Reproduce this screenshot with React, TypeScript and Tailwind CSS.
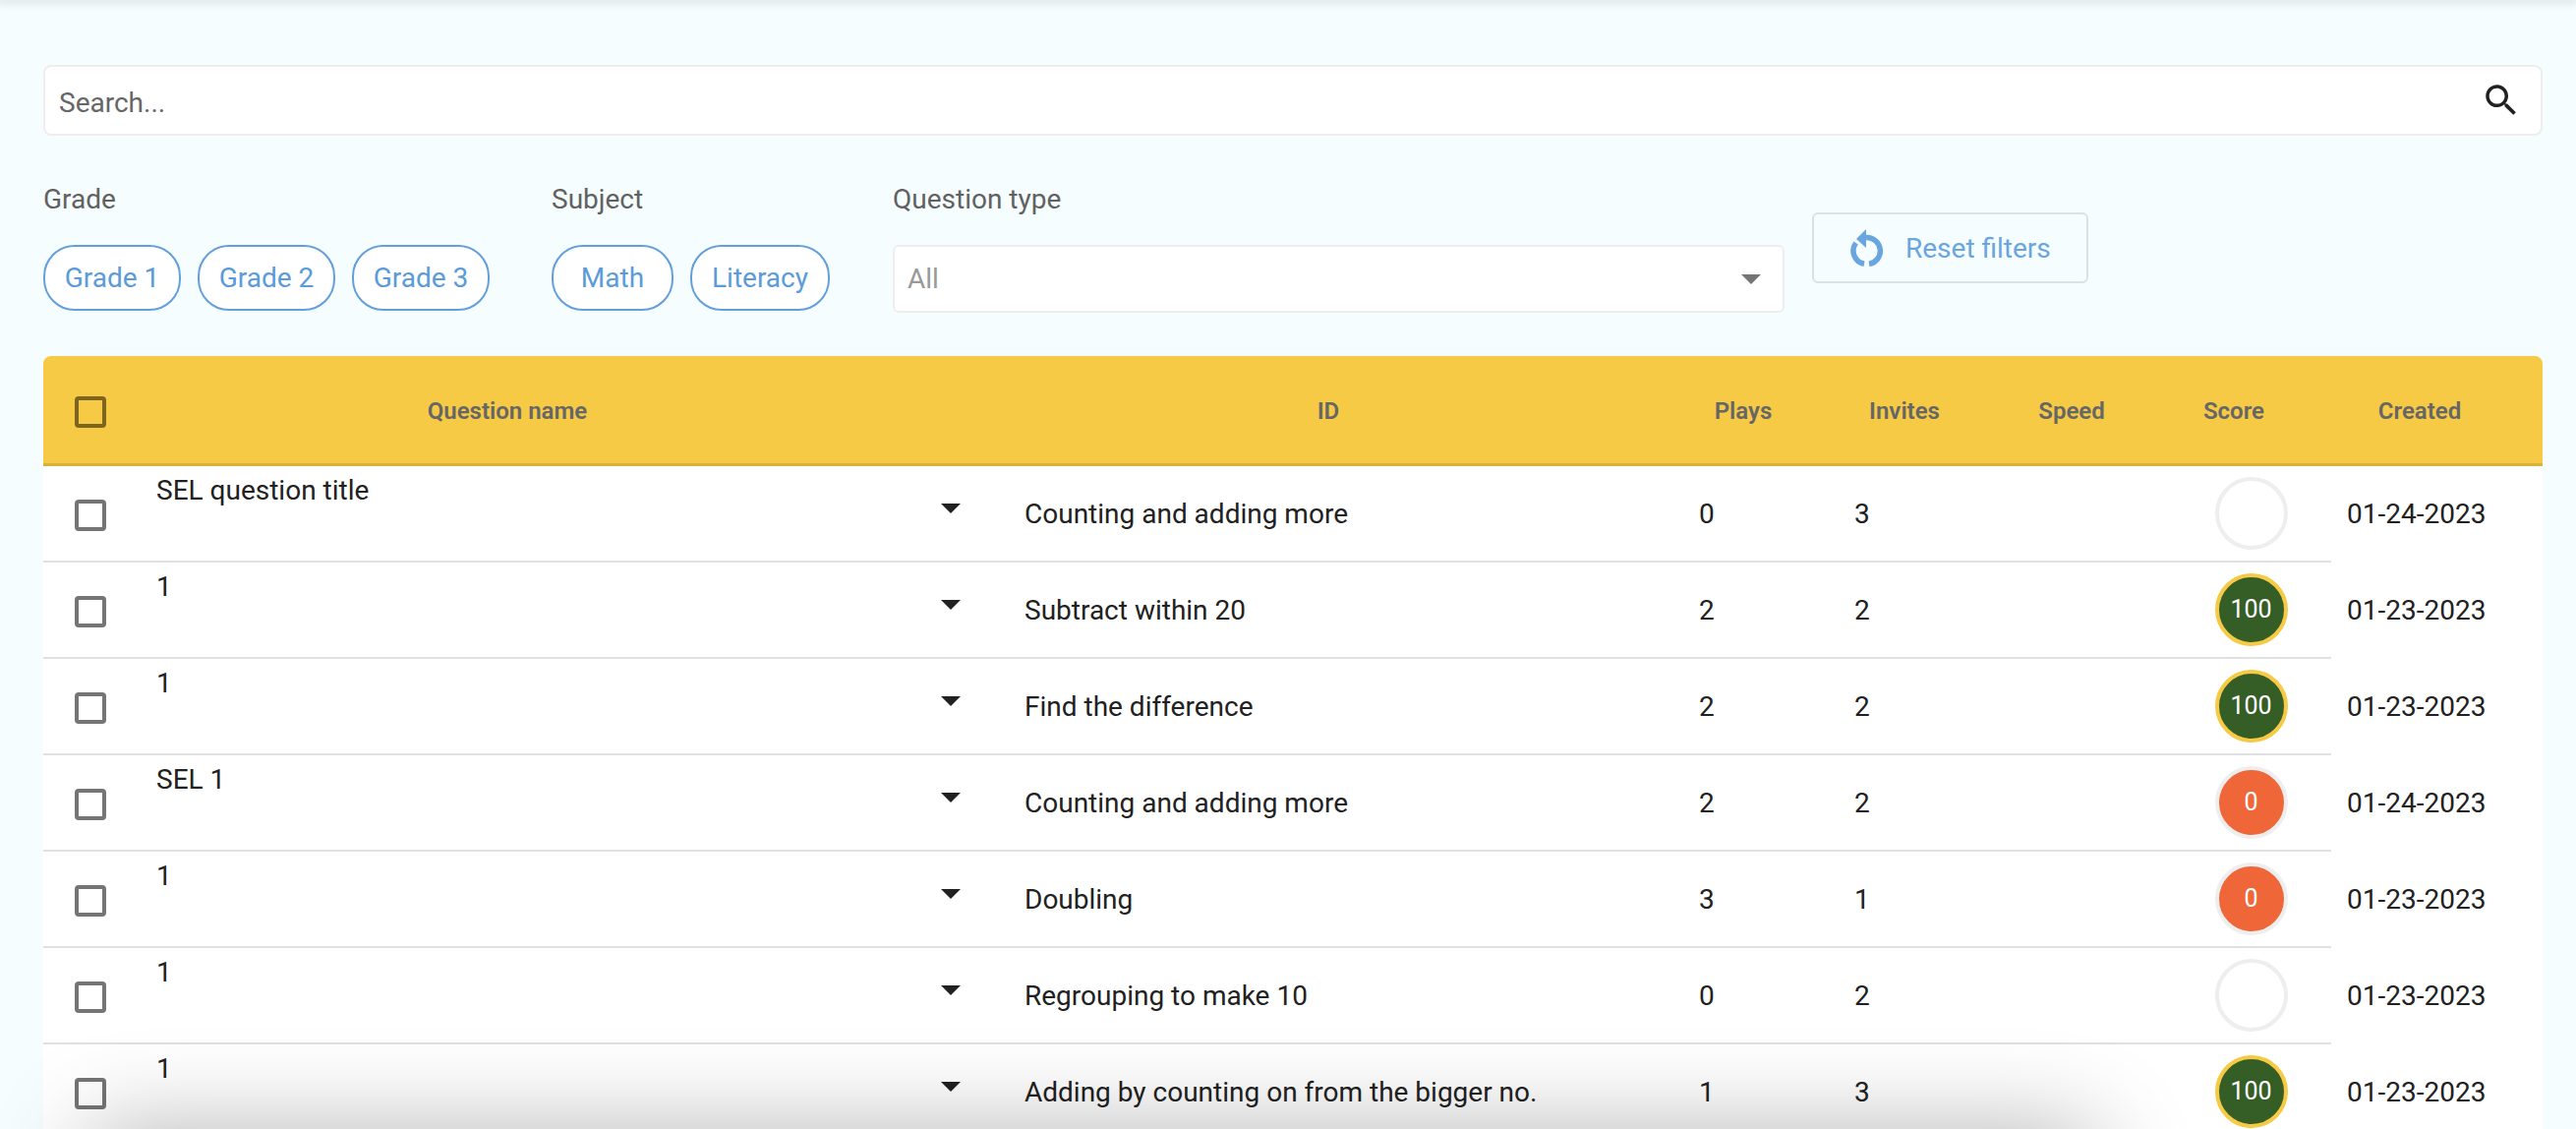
// question list - search, filter chips and the yellow-headed results table

const ROWS = [
  { name: 'SEL question title', id: 'Counting and adding more', plays: 0, invites: 3, score: null, created: '01-24-2023' },
  { name: '1', id: 'Subtract within 20', plays: 2, invites: 2, score: 100, created: '01-23-2023' },
  { name: '1', id: 'Find the difference', plays: 2, invites: 2, score: 100, created: '01-23-2023' },
  { name: 'SEL 1', id: 'Counting and adding more', plays: 2, invites: 2, score: 0, created: '01-24-2023' },
  { name: '1', id: 'Doubling', plays: 3, invites: 1, score: 0, created: '01-23-2023' },
  { name: '1', id: 'Regrouping to make 10', plays: 0, invites: 2, score: null, created: '01-23-2023' },
  { name: '1', id: 'Adding by counting on from the bigger no.', plays: 1, invites: 3, score: 100, created: '01-23-2023' },
];

const HEADERS = ['Question name', '', 'ID', 'Plays', 'Invites', 'Speed', 'Score', 'Created'];

function Chip({ label, width }: { label: string; width: string }) {
  return (
    <div className={`${width} h-[67px] rounded-[32px] border-2 border-[#629fdb] bg-white flex items-center justify-center text-[28px] text-[#5b9bd9]`}>
      {label}
    </div>
  );
}

function ScoreBadge({ score }: { score: number | null }) {
  if (score === null) return <div className="w-[74px] h-[74px] rounded-full border-4 border-[#eeeeee] bg-white" />;
  return (
    <div className={`w-[74px] h-[74px] rounded-full border-4 flex items-center justify-center text-[25px] text-white ${score === 100 ? 'border-[#f6ca44] bg-[#355e27]' : 'border-[#eeeeee] bg-[#ef6639]'}`}>
      {score}
    </div>
  );
}

function Checkbox({ dark }: { dark?: boolean }) {
  return <div className={`w-8 h-8 mt-1 ml-8 rounded-[4px] border-4 ${dark ? 'border-[#7d651f]' : 'border-[#757575]'}`} />;
}

export default function App() {
  return (
    <div className="relative h-screen overflow-hidden bg-[#f5fdff] font-['Roboto',sans-serif]">
      <div className="h-0 shadow-[0_0_8px_3px_rgba(0,0,0,0.12)]" />

      <div className="pt-[66px] pl-[44px] pr-[34px]">
        {/* search */}
        <div className="h-[72px] rounded-lg border-2 border-[#eeeeee] bg-white flex items-center justify-between pl-[14px] pr-[19px]">
          <span className="pt-[6px] text-[28px] text-[#666666]">Search...</span>
          <svg viewBox="0 0 24 24" className="w-[42px] h-[42px] fill-[#212121]">
            <path d="M15.5 14h-.79l-.28-.27C15.41 12.59 16 11.11 16 9.5 16 5.91 13.09 3 9.5 3S3 5.91 3 9.5 5.91 16 9.5 16c1.61 0 3.09-.59 4.23-1.57l.27.28v.79l5 4.99L20.49 19l-4.99-5zm-6 0C7.01 14 5 11.99 5 9.5S7.01 5 9.5 5 14 7.01 14 9.5 11.99 14 9.5 14z" />
          </svg>
        </div>

        {/* filters */}
        <div className="flex items-start mt-[44px] mb-[44px]">
          <div className="mr-[63px]">
            <div className="h-10 pt-px leading-10 mb-[27px] text-[28px] text-[#616161]">Grade</div>
            <div className="flex gap-[17px]">
              <Chip label="Grade 1" width="w-[140px]" />
              <Chip label="Grade 2" width="w-[140px]" />
              <Chip label="Grade 3" width="w-[140px]" />
            </div>
          </div>
          <div className="mr-[64px]">
            <div className="h-10 pt-px leading-10 mb-[27px] text-[28px] text-[#616161]">Subject</div>
            <div className="flex gap-[17px]">
              <Chip label="Math" width="w-[124px]" />
              <Chip label="Literacy" width="w-[142px]" />
            </div>
          </div>
          <div>
            <div className="h-10 pt-px leading-10 mb-[27px] text-[28px] text-[#616161]">Question type</div>
            <div className="w-[907px] h-[69px] rounded-md border-2 border-[#eeeeee] bg-white flex items-center justify-between pl-[13px] pr-[22px]">
              <span className="text-[28px] text-[#999999]">All</span>
              <svg viewBox="0 0 20 10" className="w-5 h-[10px] fill-[#757575]">
                <path d="M0 0h20L10 10z" />
              </svg>
            </div>
          </div>
          <div className="ml-7 mt-[34px] w-[281px] h-[72px] rounded-md border-2 border-[#dde0e4] flex items-center pl-[37px] gap-[22px] text-[28px] text-[#69a5de]">
            <svg viewBox="0 0 34 40" className="w-[34px] h-10 fill-none stroke-[#69a5de] stroke-[5.5]">
              <path d="M16 9.6a13.5 13.5 0 0 1 3 26.8" />
              <path d="M14 36.2A13.5 13.5 0 0 1 5.6 15" />
              <path d="M16 1L6 11l10 9z" className="fill-[#69a5de] stroke-none" />
            </svg>
            <span className="pt-[2px]">Reset filters</span>
          </div>
        </div>

        {/* table */}
        <div>
          <div className="h-[112px] rounded-t-lg bg-[#f6ca44] border-b-[3px] border-[#d9b13a] flex items-center">
            <div className="w-[96px]">
              <Checkbox dark />
            </div>
            <div className="flex-1 pt-[2px] grid grid-cols-[752px_132px_654px_190px_138px_202px_128px_250px] text-[24px] font-semibold text-[#666666] text-center">
              {HEADERS.map((h, i) => (
                <div key={i}>{h}</div>
              ))}
            </div>
          </div>

          {ROWS.map((row, i) => (
            <div key={i} className="h-[98px] flex bg-white text-[28px] text-[#212121]">
              <div className="w-[2327px] border-b-2 border-[#e0e0e0] grid grid-cols-[96px_752px_132px_654px_190px_138px_202px_163px] items-center">
                <Checkbox />
                <div className="self-start pl-[19px] pt-[5px] leading-10">{row.name}</div>
                <div className="flex justify-center ml-[18px] -mt-[12px]">
                  <svg viewBox="0 0 24 24" className="w-12 h-12 fill-[#212121]">
                    <path d="M7 10l5 5 5-5z" />
                  </svg>
                </div>
                <div className="pl-[18px] pt-[2px]">{row.id}</div>
                <div className="pl-[50px] pt-[2px]">{row.plays}</div>
                <div className="pl-[18px] pt-[2px]">{row.invites}</div>
                <div />
                <div className="flex justify-center">
                  <ScoreBadge score={row.score} />
                </div>
              </div>
              <div className="flex-1 pl-4 flex items-center">{row.created}</div>
            </div>
          ))}
        </div>
      </div>

      {/* shadow of the bar sitting just below the fold */}
      <div className="absolute left-[130px] top-[1190px] w-[1960px] h-[100px] shadow-[0_0_100px_40px_rgba(0,0,0,0.3)]" />
    </div>
  );
}
